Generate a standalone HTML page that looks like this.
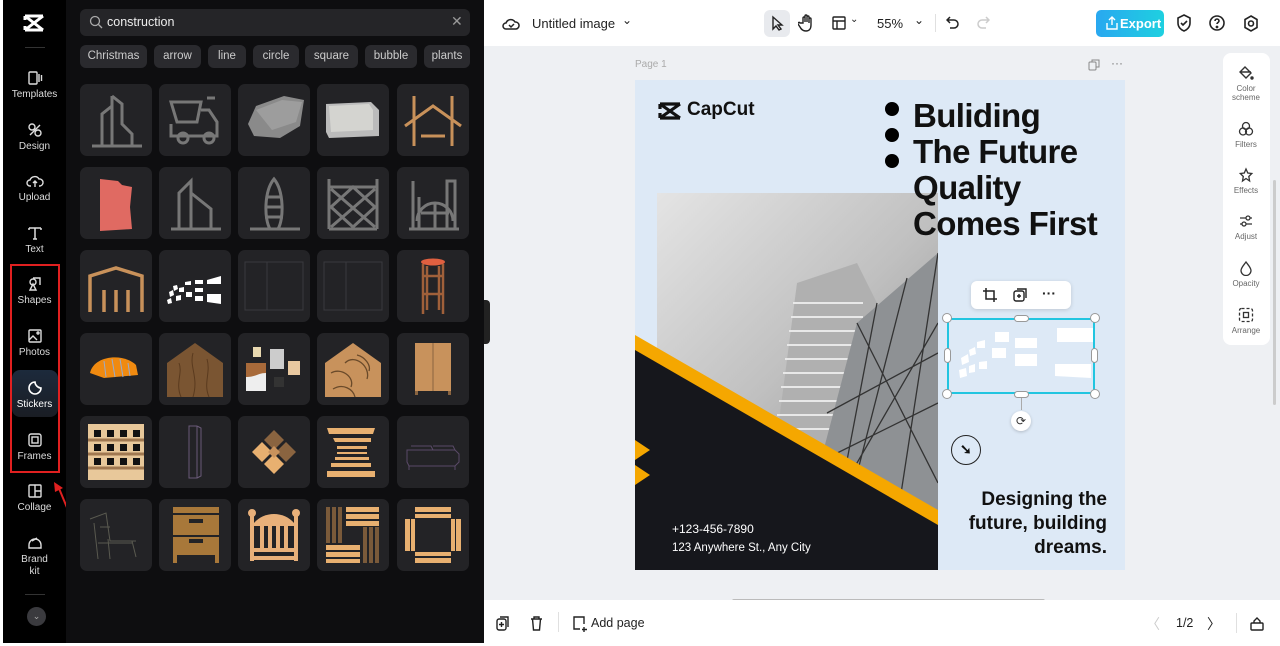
<!DOCTYPE html>
<html><head><meta charset="utf-8"><style>
*{margin:0;padding:0;box-sizing:border-box}
body{width:1280px;height:646px;overflow:hidden;background:#fff;font-family:"Liberation Sans",sans-serif;position:relative}
.a{position:absolute}
#side{left:3px;top:0;width:63px;height:643px;background:#000}
.nav{position:absolute;left:0;width:63px;text-align:center;color:#ddd;font-size:10px}
.nav svg{display:block;margin:0 auto 3px}
#panel{left:66px;top:0;width:418px;height:643px;background:#0e0e10}
.chip{position:absolute;top:45px;height:23px;border-radius:6px;background:#2a2a2e;color:#ccc;font-size:11.5px;line-height:23px;text-align:center}
.tile{position:absolute;width:72px;height:72px;border-radius:7px;background:#232326;overflow:hidden}
.tile svg{width:72px;height:72px}
#main{left:484px;top:0;width:796px;height:646px;background:#eef0f3}
#top{left:484px;top:0;width:796px;height:46px;background:#fff}
#bot{left:484px;top:600px;width:796px;height:44px;background:#fff}
.rp{position:absolute;left:0;width:46px;text-align:center;font-size:8px;color:#666;line-height:9px}
.rp svg{display:block;margin:0 auto 3px}
</style></head><body>
<div class="a" id="side">
 <svg class="a" style="left:19px;top:13px" width="24" height="20" viewBox="0 0 24 20"><path d="M3 3h18M3 17h18M3 3l18 14M21 3L3 17M3 3v4M3 17v-4" stroke="#fff" stroke-width="3" fill="none"/></svg>
 <div class="a" style="left:22px;top:47px;width:20px;height:1px;background:#333"></div>
 <div class="nav" style="top:70px"><svg width="16" height="16" viewBox="0 0 16 16" fill="none" stroke="#ddd" stroke-width="1.4"><rect x="2" y="2" width="8" height="12" rx="1"/><path d="M12 4v8M14.5 5v6"/></svg>Templates</div>
 <div class="nav" style="top:122px"><svg width="16" height="16" viewBox="0 0 16 16" fill="none" stroke="#ddd" stroke-width="1.4"><circle cx="5" cy="5" r="3"/><circle cx="11" cy="11" r="3"/><path d="M3 13l10-10"/></svg>Design</div>
 <div class="nav" style="top:173px"><svg width="18" height="16" viewBox="0 0 18 16" fill="none" stroke="#ddd" stroke-width="1.4"><path d="M5 13H4a3 3 0 010-6 5 5 0 019-1 3.5 3.5 0 011 7h-1M9 14V8M7 10l2-2 2 2"/></svg>Upload</div>
 <div class="nav" style="top:225px"><svg width="16" height="16" viewBox="0 0 16 16" fill="none" stroke="#ddd" stroke-width="1.5"><path d="M2 3h12M8 3v11M2 3v2M14 3v2M6 14h4"/></svg>Text</div>
 <div class="a" style="left:7px;top:264px;width:50px;height:209px;border:2px solid #e02020"></div>
 <div class="nav" style="top:276px"><svg width="16" height="16" viewBox="0 0 16 16" fill="none" stroke="#ddd" stroke-width="1.4"><path d="M6 2h7v7M3 14l3-6 3 6z"/><circle cx="6" cy="6" r="3"/></svg>Shapes</div>
 <div class="nav" style="top:328px"><svg width="16" height="16" viewBox="0 0 16 16" fill="none" stroke="#ddd" stroke-width="1.4"><rect x="2" y="2" width="12" height="12" rx="1"/><path d="M2 12l4-4 4 4"/><circle cx="11" cy="5" r="1"/></svg>Photos</div>
 <div class="a" style="left:9px;top:370px;width:46px;height:47px;border-radius:8px;background:linear-gradient(#1c2a3c,#1a1d24)"></div>
 <div class="nav" style="top:380px;color:#fff"><svg width="16" height="16" viewBox="0 0 16 16" fill="none" stroke="#fff" stroke-width="1.6"><path d="M14 8a6 6 0 11-6-6c0 3 3 6 6 6z"/></svg>Stickers</div>
 <div class="nav" style="top:432px"><svg width="16" height="16" viewBox="0 0 16 16" fill="none" stroke="#ddd" stroke-width="1.4"><rect x="2" y="2" width="12" height="12" rx="2"/><rect x="5" y="5" width="6" height="6"/></svg>Frames</div>
 <div class="nav" style="top:483px"><svg width="16" height="16" viewBox="0 0 16 16" fill="none" stroke="#ddd" stroke-width="1.4"><rect x="2" y="2" width="12" height="12" rx="1"/><path d="M8 2v12M8 8h6"/></svg>Collage</div>
 <svg class="a" style="left:48px;top:480px" width="26" height="44" viewBox="0 0 26 44"><path d="M22 42L7 6" stroke="#e02020" stroke-width="2"/><path d="M3 2l1 10 8-4z" fill="#e02020"/></svg>
 <div class="nav" style="top:535px;line-height:12px"><svg width="16" height="16" viewBox="0 0 16 16" fill="none" stroke="#ddd" stroke-width="1.4"><path d="M2 13h12v-3a6 6 0 00-12 0z M5 6l5-3"/></svg>Brand<br>kit</div>
 <div class="a" style="left:22px;top:594px;width:20px;height:1px;background:#333"></div>
 <div class="a" style="left:24px;top:607px;width:19px;height:19px;border-radius:50%;background:#3a3a3e;color:#aaa;font-size:9px;text-align:center;line-height:18px">⌄</div>
</div>

<div class="a" id="panel">
 <div class="a" style="left:14px;top:9px;width:390px;height:27px;border-radius:6px;background:#252528"></div>
 <svg class="a" style="left:23px;top:15px" width="14" height="14" viewBox="0 0 14 14" fill="none" stroke="#aaa" stroke-width="1.3"><circle cx="6" cy="6" r="4.5"/><path d="M9.5 9.5L13 13"/></svg>
 <div class="a" style="left:41px;top:15px;color:#eee;font-size:12.5px">construction</div>
 <div class="a" style="left:385px;top:13px;color:#999;font-size:14px">✕</div>
 <div class="chip" style="left:14px;width:67px">Christmas</div>
 <div class="chip" style="left:88px;width:47px">arrow</div>
 <div class="chip" style="left:142px;width:38px">line</div>
 <div class="chip" style="left:187px;width:46px">circle</div>
 <div class="chip" style="left:239px;width:53px">square</div>
 <div class="chip" style="left:299px;width:52px">bubble</div>
 <div class="chip" style="left:358px;width:46px;overflow:hidden">plants</div>
</div>

<!-- tiles -->
<div class="tile" style="left:80px;top:84px"><svg viewBox="0 0 72 72" fill="none" stroke="#777" stroke-width="3"><path d="M12 62h50M22 62V30l10-8v40M32 12l10 8v20l10 10v12M32 12v50"/></svg></div>
<div class="tile" style="left:159px;top:84px"><svg viewBox="0 0 72 72" fill="none" stroke="#777" stroke-width="3"><path d="M12 18h30l-4 20H18zM42 26h8l8 12v14H12V40M48 14h8"/><circle cx="24" cy="54" r="5"/><circle cx="50" cy="54" r="5"/></svg></div>
<div class="tile" style="left:238px;top:84px"><svg viewBox="0 0 72 72"><path d="M10 40l8-18 28-10 20 4-4 26-20 12-26-2z" fill="#8a8a8a"/><path d="M18 26l26-10 20 2-6 20-24 8z" fill="#aaa" opacity=".6"/></svg></div>
<div class="tile" style="left:317px;top:84px"><svg viewBox="0 0 72 72"><path d="M9 20l45-2 8 8v26l-50 2-3-6z" fill="#bbb"/><path d="M12 22l40-2 4 6v20l-42 2z" fill="#d4d4d0"/></svg></div>
<div class="tile" style="left:397px;top:84px"><svg viewBox="0 0 72 72" fill="none" stroke="#c8915a" stroke-width="3"><path d="M17 12v50M55 12v50M8 42l28-20 28 20M24 52h24"/></svg></div>

<div class="tile" style="left:80px;top:167px"><svg viewBox="0 0 72 72"><path d="M20 12l18 2 4 4 10 2-2 20 2 22-32 2z" fill="#e06a62"/></svg></div>
<div class="tile" style="left:159px;top:167px"><svg viewBox="0 0 72 72" fill="none" stroke="#777" stroke-width="3"><path d="M12 62h50M20 62V26l12-12v48M32 26l20 16v20"/></svg></div>
<div class="tile" style="left:238px;top:167px"><svg viewBox="0 0 72 72" fill="none" stroke="#777" stroke-width="3"><path d="M12 62h50M36 12c-10 12-10 40-4 50h8c6-10 6-38-4-50zM28 30h16M27 40h18M27 50h18"/></svg></div>
<div class="tile" style="left:317px;top:167px"><svg viewBox="0 0 72 72" fill="none" stroke="#777" stroke-width="3"><path d="M12 12v50M60 12v50M12 20h48M12 62h48M14 22l44 38M58 22L14 60M14 40l22-20 22 20-22 20z"/></svg></div>
<div class="tile" style="left:397px;top:167px"><svg viewBox="0 0 72 72" fill="none" stroke="#777" stroke-width="3"><path d="M12 62h50M16 14v48M22 30v32M50 14h8v48h-8zM20 54a18 18 0 0136 0M38 36v26M24 46h28"/></svg></div>

<div class="tile" style="left:80px;top:250px"><svg viewBox="0 0 72 72" fill="none" stroke="#c8915a" stroke-width="3.5"><path d="M10 36v-10l26-8 26 8v10M10 34v28M24 40v22M36 40v22M48 40v22M62 34v28"/></svg></div>
<div class="tile" style="left:159px;top:250px"><svg viewBox="0 0 72 72" fill="#fff"><path d="M8 50l4-2 1 5-4 1zM10 42l4-2 1 5-4 2zM14 36l4-1 1 4-4 2zM17 46l5-1v5l-5 1zM20 38l5-1v5h-5zM26 32l6-1v4h-6zM27 42h6v5h-6zM36 30h8v4h-8zM36 38h8v4h-8zM36 46h8v5h-8zM48 30l14-4v8H48zM48 44h14v10l-14-2z"/></svg></div>
<div class="tile" style="left:238px;top:250px"><svg viewBox="0 0 72 72" fill="none" stroke="#3a3a3e" stroke-width="1"><rect x="7" y="12" width="58" height="48"/><path d="M29 12v48"/></svg></div>
<div class="tile" style="left:317px;top:250px"><svg viewBox="0 0 72 72" fill="none" stroke="#3a3a3e" stroke-width="1"><rect x="7" y="12" width="58" height="48"/><path d="M29 12v48"/></svg></div>
<div class="tile" style="left:397px;top:250px"><svg viewBox="0 0 72 72"><ellipse cx="36" cy="12" rx="12" ry="3.5" fill="#e06040"/><g stroke="#a0603a" stroke-width="2.5" fill="none"><path d="M26 14v50M46 14v50M30 16v44M42 16v44M26 44h20M26 26h20"/></g></svg></div>

<div class="tile" style="left:80px;top:333px"><svg viewBox="0 0 72 72"><path d="M10 40c4-18 34-20 46-8l2 10-34 3z" fill="#f08a10"/><path d="M24 28l2 16M32 26l3 18M40 26l3 18M48 30l2 13" stroke="#9ac" stroke-width="1"/></svg></div>
<div class="tile" style="left:159px;top:333px"><svg viewBox="0 0 72 72"><path d="M8 30L36 10l28 20v34H8z" fill="#7a5532"/><path d="M20 30c4 10-4 20 2 34M34 20c-4 14 6 24 0 44M48 26c4 14-4 24 2 38" stroke="#5a3a1e" fill="none"/></svg></div>
<div class="tile" style="left:238px;top:333px"><svg viewBox="0 0 72 72"><rect x="15" y="14" width="8" height="10" fill="#e8d8b0"/><rect x="32" y="16" width="14" height="20" fill="#ccc"/><rect x="8" y="30" width="20" height="28" fill="#eee"/><path d="M8 30h20v10c-8 0-10 4-20 4z" fill="#a86a3a"/><rect x="50" y="28" width="12" height="14" fill="#e8c8a0"/><rect x="36" y="44" width="10" height="10" fill="#333"/></svg></div>
<div class="tile" style="left:317px;top:333px"><svg viewBox="0 0 72 72"><path d="M8 30L36 10l28 20v34H8z" fill="#c8925c"/><path d="M14 40c10-6 24 4 20 14M28 30c10-10 26 4 22 16M40 22c8 2 14 10 12 16M16 56c10-6 20 0 22 8" stroke="#6a4a2a" stroke-width="1.3" fill="none"/></svg></div>
<div class="tile" style="left:397px;top:333px"><svg viewBox="0 0 72 72"><rect x="18" y="10" width="36" height="48" fill="#c8925c"/><path d="M36 10v48" stroke="#8a6440"/><rect x="18" y="58" width="3" height="4" fill="#8a6440"/><rect x="51" y="58" width="3" height="4" fill="#8a6440"/></svg></div>

<div class="tile" style="left:80px;top:416px"><svg viewBox="0 0 72 72"><rect x="8" y="8" width="56" height="56" fill="#e8c89a"/><g fill="#111"><rect x="14" y="14" width="7" height="7"/><rect x="27" y="14" width="7" height="7"/><rect x="40" y="14" width="7" height="7"/><rect x="53" y="14" width="7" height="7"/><rect x="14" y="28" width="7" height="7"/><rect x="27" y="28" width="7" height="7"/><rect x="40" y="28" width="7" height="7"/><rect x="53" y="28" width="7" height="7"/><rect x="14" y="42" width="7" height="7"/><rect x="27" y="42" width="7" height="7"/><rect x="40" y="42" width="7" height="7"/><rect x="53" y="42" width="7" height="7"/></g><path d="M8 24h56M8 38h56M8 52h56" stroke="#a07850" stroke-width="3"/></svg></div>
<div class="tile" style="left:159px;top:416px"><svg viewBox="0 0 72 72" fill="none" stroke="#6a5a78"><path d="M30 10h8v52h-8zM38 10l4 2v48l-4 2"/></svg></div>
<div class="tile" style="left:238px;top:416px"><svg viewBox="0 0 72 72"><path d="M36 14l10 10-10 10-10-10z" fill="#8a6440"/><path d="M36 58l10-10-10-10-10 10z" fill="#e8b070"/><path d="M14 36l10-10 10 10-10 10z" fill="#e8b070"/><path d="M58 36l-10-10-10 10 10 10z" fill="#8a6440"/><path d="M36 30l6 6-6 6-6-6z" fill="#c8925c"/></svg></div>
<div class="tile" style="left:317px;top:416px"><svg viewBox="0 0 72 72" fill="#e8b070"><path d="M10 12h48l-2 6H12zM16 22h38v4H18zM20 30h30v3H20zM20 36h30v2H20zM18 41h34v3H18zM14 47h40v4H14zM10 55h48v6H10z"/></svg></div>
<div class="tile" style="left:397px;top:416px"><svg viewBox="0 0 72 72" fill="none" stroke="#5a4a68"><path d="M10 34h48l4 4v8l-4 4H12l-2-4zM14 30h20l2 4M36 30h20l2 4M12 50v4M58 50v4"/></svg></div>

<div class="tile" style="left:80px;top:499px"><svg viewBox="0 0 72 72" fill="none" stroke="#5a5a50"><path d="M10 20l16-6 4 28h26M14 24l4 36M28 40l2 20M52 42l4 16M18 44h34M20 28h10"/></svg></div>
<div class="tile" style="left:159px;top:499px"><svg viewBox="0 0 72 72" fill="#a8783a"><rect x="14" y="8" width="46" height="6"/><path d="M14 16h46v20H14zM14 38h46v18H14z"/><rect x="14" y="56" width="4" height="8"/><rect x="56" y="56" width="4" height="8"/><rect x="30" y="20" width="14" height="4" fill="#232326"/><rect x="30" y="40" width="14" height="4" fill="#232326"/></svg></div>
<div class="tile" style="left:238px;top:499px"><svg viewBox="0 0 72 72" fill="#e8b07a"><circle cx="14" cy="14" r="4"/><circle cx="58" cy="14" r="4"/><rect x="12" y="16" width="4" height="46"/><rect x="56" y="16" width="4" height="46"/><path d="M16 24c10-12 30-12 40 0v3H16z"/><rect x="22" y="27" width="4" height="22"/><rect x="30" y="27" width="4" height="22"/><rect x="38" y="27" width="4" height="22"/><rect x="46" y="27" width="4" height="22"/><rect x="16" y="49" width="40" height="4"/><rect x="16" y="57" width="40" height="4"/></svg></div>
<div class="tile" style="left:317px;top:499px"><svg viewBox="0 0 72 72"><g fill="#7a5a3a"><rect x="9" y="8" width="4" height="36"/><rect x="15" y="8" width="4" height="36"/><rect x="21" y="8" width="4" height="36"/><rect x="46" y="28" width="4" height="36"/><rect x="52" y="28" width="4" height="36"/><rect x="58" y="28" width="4" height="36"/></g><g fill="#e8b070"><rect x="29" y="8" width="33" height="5"/><rect x="29" y="15" width="33" height="5"/><rect x="29" y="22" width="33" height="5"/><rect x="9" y="46" width="34" height="5"/><rect x="9" y="53" width="34" height="5"/><rect x="9" y="60" width="34" height="4"/></g></svg></div>
<div class="tile" style="left:397px;top:499px"><svg viewBox="0 0 72 72" fill="#e8b070"><rect x="18" y="8" width="36" height="5"/><rect x="18" y="15" width="36" height="4"/><rect x="18" y="53" width="36" height="4"/><rect x="18" y="59" width="36" height="5"/><rect x="8" y="20" width="5" height="32"/><rect x="14" y="20" width="4" height="32"/><rect x="54" y="20" width="4" height="32"/><rect x="59" y="20" width="5" height="32"/></svg></div>

<div class="a" id="main"></div>
<div class="a" style="left:484px;top:300px;width:6px;height:44px;background:#222;border-radius:0 4px 4px 0"></div>
<div class="a" id="top"></div>
<svg class="a" style="left:502px;top:15px" width="18" height="16" viewBox="0 0 18 16" fill="none" stroke="#222" stroke-width="1.5"><path d="M5 14H4a3 3 0 010-6 5 5 0 019-1 3.5 3.5 0 011 7H5zM7 10l2 2 3-3"/></svg>
<div class="a" style="left:532px;top:16px;font-size:13px;color:#222">Untitled image</div>
<div class="a" style="left:622px;top:13px;font-size:12px;color:#222">⌄</div>
<div class="a" style="left:764px;top:10px;width:26px;height:27px;border-radius:6px;background:#e8eaee"></div>
<svg class="a" style="left:770px;top:15px" width="14" height="16" viewBox="0 0 14 16" fill="none" stroke="#222" stroke-width="1.4"><path d="M3 2v12l3-3 3 4 2-1-3-4h4z"/></svg>
<svg class="a" style="left:798px;top:14px" width="16" height="18" viewBox="0 0 16 18" fill="none" stroke="#222" stroke-width="1.4"><path d="M5 9V4a1 1 0 012 0v4V2a1 1 0 012 0v6V3a1 1 0 012 0v6V5a1 1 0 012 0v6c0 4-2 6-5 6s-5-2-6-4l-2-3a1 1 0 012-1z"/></svg>
<svg class="a" style="left:832px;top:16px" width="14" height="14" viewBox="0 0 14 14" fill="none" stroke="#222" stroke-width="1.4"><rect x="1" y="1" width="12" height="12" rx="1"/><path d="M1 5h12M5 5v8"/></svg>
<div class="a" style="left:850px;top:14px;font-size:10px;color:#222">⌄</div>
<div class="a" style="left:877px;top:16px;font-size:13px;color:#222">55%</div>
<div class="a" style="left:914px;top:13px;font-size:12px;color:#222">⌄</div>
<div class="a" style="left:935px;top:14px;width:1px;height:18px;background:#e0e0e0"></div>
<svg class="a" style="left:946px;top:15px" width="14" height="16" viewBox="0 0 14 16" fill="none" stroke="#222" stroke-width="1.5"><path d="M4 2L1 5l3 3M1 5h7a4 4 0 010 8H4"/></svg>
<svg class="a" style="left:976px;top:15px" width="14" height="16" viewBox="0 0 14 16" fill="none" stroke="#ccc" stroke-width="1.5"><path d="M10 2l3 3-3 3M13 5H6a4 4 0 000 8h4"/></svg>
<div class="a" style="left:1096px;top:10px;width:68px;height:27px;border-radius:5px;background:linear-gradient(90deg,#29a8f0,#1ed0e0);color:#fff;font-size:13px;font-weight:bold;line-height:27px;padding-left:24px">Export</div>
<svg class="a" style="left:1106px;top:16px" width="12" height="14" viewBox="0 0 12 14" fill="none" stroke="#fff" stroke-width="1.4"><path d="M6 9V1M3 4l3-3 3 3M1 7v6h10V7"/></svg>
<svg class="a" style="left:1176px;top:14px" width="16" height="18" viewBox="0 0 16 18" fill="none" stroke="#222" stroke-width="1.6"><path d="M8 1l6 3v5c0 4-3 7-6 8-3-1-6-4-6-8V4zM5 9l2 2 4-4"/></svg>
<svg class="a" style="left:1209px;top:15px" width="16" height="16" viewBox="0 0 16 16" fill="none" stroke="#222" stroke-width="1.6"><circle cx="8" cy="8" r="7"/><path d="M6 6a2 2 0 114 0c0 1.5-2 1.5-2 3"/><circle cx="8" cy="12" r=".6"/></svg>
<svg class="a" style="left:1243px;top:15px" width="16" height="17" viewBox="0 0 16 17" fill="none" stroke="#222" stroke-width="1.6"><path d="M8 1l6 3.5v8L8 16l-6-3.5v-8z"/><circle cx="8" cy="8.5" r="2.5"/></svg>

<div class="a" style="left:635px;top:59px;font-size:10px;color:#aaa">Page 1</div>
<svg class="a" style="left:1088px;top:59px" width="12" height="12" viewBox="0 0 12 12" fill="none" stroke="#888"><rect x="1" y="3" width="7" height="8" rx="1"/><path d="M4 3V1h7v7H8"/></svg>
<div class="a" style="left:1111px;top:56px;font-size:12px;color:#777">···</div>

<!-- poster -->
<div class="a" style="left:635px;top:80px;width:490px;height:490px;background:#dde9f6;overflow:hidden">
 <svg class="a" style="left:22px;top:21px" width="28" height="20" viewBox="0 0 28 20"><path d="M3 3h20M3 17h20M3 3l20 14M23 3L3 17M3 3v5M3 17v-5" stroke="#111" stroke-width="3.2" fill="none"/></svg>
 <div class="a" style="left:52px;top:19px;font-size:19px;font-weight:bold;color:#111">CapCut</div>
 <div class="a" style="left:250px;top:22px;width:14px;height:14px;border-radius:50%;background:#000"></div>
 <div class="a" style="left:250px;top:48px;width:14px;height:14px;border-radius:50%;background:#000"></div>
 <div class="a" style="left:250px;top:74px;width:14px;height:14px;border-radius:50%;background:#000"></div>
 <div class="a" style="left:22px;top:113px;width:281px;height:322px;background:linear-gradient(135deg,#e4e4e4,#c0c0c0 50%,#8a8a8a)"></div>
 <svg class="a" style="left:22px;top:113px" width="281" height="322" viewBox="0 0 281 322"><path d="M110 320L140 90l60-20 20 40-20 210z" fill="#b0b0b0"/><g stroke="#e8e8e8" stroke-width="2"><path d="M136 110h70M134 124h72M132 138h72M130 152h74M128 166h74M126 180h76M124 194h76M122 208h78M120 222h78M118 236h80"/></g><path d="M150 320L200 130 281 60v262z" fill="#8e9194"/><g stroke="#333" stroke-width="1.3" fill="none"><path d="M200 130l81 160M220 110l-40 210M250 85l-60 235M281 60l-40 260M170 220l111-60M160 270l121-60M281 130l-110 190"/></g></svg>
 <svg class="a" style="left:0;top:0" width="490" height="490" viewBox="0 0 490 490"><path d="M0 255l303 175v60H0z" fill="#f5a700"/><path d="M0 270l303 175v45H0z" fill="#16171c"/><path d="M0 360l15 10-15 10zM0 385l15 10-15 10z" fill="#f5a700"/></svg>
 <div class="a" style="left:278px;top:18px;font-size:33px;font-weight:bold;color:#111;line-height:36px;letter-spacing:-.6px">Buliding<br>The Future<br>Quality<br>Comes First</div>
 <div class="a" style="left:37px;top:442px;color:#fff;font-size:12px">+123-456-7890</div>
 <div class="a" style="left:37px;top:462px;color:#fff;font-size:11.5px">123 Anywhere St., Any City</div>
 <div class="a" style="right:18px;top:408px;font-size:19px;font-weight:bold;color:#111;text-align:right;line-height:24px">Designing the<br>future, building<br>dreams.</div>
 <div class="a" style="left:316px;top:355px;width:30px;height:30px;border-radius:50%;border:1.5px solid #222"></div>
 <div class="a" style="left:325px;top:361px;font-size:14px;font-weight:bold;color:#111">➘</div>
 <svg class="a" style="left:312px;top:238px" width="148" height="75" viewBox="0 0 148 75" fill="#fff"><path d="M14 40l7-4 1 8-7 3zM22 32l6-3 1 7-6 2zM30 24l8-2v8h-8zM12 52l7-2 1 8-7 2zM22 48l6-2v8l-6 1zM32 44l8-1v8h-8zM48 14h14v10H48zM45 30h14v10H45zM68 20h22v10H68zM68 36h22v12H68zM110 10h36v14h-36zM108 46h36v14l-36-2z"/></svg>
</div>
<!-- selection -->
<div class="a" style="left:947px;top:318px;width:148px;height:76px;border:2px solid #22c5e0"></div>
<div class="a" style="left:942px;top:313px;width:10px;height:10px;border-radius:50%;background:#fff;border:1px solid #999"></div>
<div class="a" style="left:1090px;top:313px;width:10px;height:10px;border-radius:50%;background:#fff;border:1px solid #999"></div>
<div class="a" style="left:942px;top:389px;width:10px;height:10px;border-radius:50%;background:#fff;border:1px solid #999"></div>
<div class="a" style="left:1090px;top:389px;width:10px;height:10px;border-radius:50%;background:#fff;border:1px solid #999"></div>
<div class="a" style="left:1014px;top:315px;width:15px;height:7px;border-radius:4px;background:#fff;border:1px solid #999"></div>
<div class="a" style="left:1014px;top:391px;width:15px;height:7px;border-radius:4px;background:#fff;border:1px solid #999"></div>
<div class="a" style="left:944px;top:348px;width:7px;height:15px;border-radius:4px;background:#fff;border:1px solid #999"></div>
<div class="a" style="left:1091px;top:348px;width:7px;height:15px;border-radius:4px;background:#fff;border:1px solid #999"></div>
<div class="a" style="left:1021px;top:398px;width:1px;height:12px;background:#aaa"></div>
<div class="a" style="left:1011px;top:411px;width:20px;height:20px;border-radius:50%;background:#fff;box-shadow:0 1px 3px rgba(0,0,0,.2);font-size:12px;text-align:center;line-height:20px;color:#333">⟳</div>
<div class="a" style="left:971px;top:281px;width:100px;height:28px;border-radius:6px;background:#fff;box-shadow:0 1px 4px rgba(0,0,0,.15)"></div>
<svg class="a" style="left:983px;top:288px" width="14" height="14" viewBox="0 0 14 14" fill="none" stroke="#222" stroke-width="1.5"><path d="M3 0v11h11M0 3h11v11"/></svg>
<svg class="a" style="left:1013px;top:288px" width="14" height="14" viewBox="0 0 14 14" fill="none" stroke="#222" stroke-width="1.4"><rect x="1" y="3" width="10" height="10" rx="2"/><path d="M4 1h9v9M6 6v4M4 8h4"/></svg>
<div class="a" style="left:1042px;top:285px;font-size:14px;font-weight:bold;color:#222">···</div>

<!-- right panel -->
<div class="a" style="left:1223px;top:53px;width:47px;height:292px;border-radius:8px;background:#fff"></div>
<div class="a" style="left:1273px;top:180px;width:3px;height:225px;background:#ccc;border-radius:2px"></div>
<div class="a" style="left:1223px;top:0">
 <div class="rp" style="top:65px"><svg width="16" height="16" viewBox="0 0 16 16" fill="none" stroke="#333" stroke-width="1.4"><path d="M7 2l6 6-5 5-6-6zM2 7h11"/><circle cx="14" cy="13" r="1" fill="#333"/></svg>Color<br>scheme</div>
 <div class="rp" style="top:121px"><svg width="16" height="16" viewBox="0 0 16 16" fill="none" stroke="#333" stroke-width="1.3"><circle cx="8" cy="5" r="3.5"/><circle cx="5" cy="10.5" r="3.5"/><circle cx="11" cy="10.5" r="3.5"/></svg>Filters</div>
 <div class="rp" style="top:167px"><svg width="16" height="16" viewBox="0 0 16 16" fill="none" stroke="#333" stroke-width="1.3"><path d="M8 2l1.8 4 4 .5-3 3 .8 4.5L8 11.5 4.5 14l.8-4.5-3-3 4-.5z"/></svg>Effects</div>
 <div class="rp" style="top:213px"><svg width="16" height="16" viewBox="0 0 16 16" fill="none" stroke="#333" stroke-width="1.3"><path d="M2 5h12M2 11h12"/><circle cx="10" cy="5" r="2" fill="#fff"/><circle cx="6" cy="11" r="2" fill="#fff"/></svg>Adjust</div>
 <div class="rp" style="top:260px"><svg width="16" height="16" viewBox="0 0 16 16" fill="none" stroke="#333" stroke-width="1.3"><path d="M8 2c3 4 5 6 5 8.5a5 5 0 01-10 0C3 8 5 6 8 2z"/></svg>Opacity</div>
 <div class="rp" style="top:307px"><svg width="16" height="16" viewBox="0 0 16 16" fill="none" stroke="#333" stroke-width="1.3"><rect x="1.5" y="1.5" width="13" height="13" rx="2" stroke-dasharray="3 2"/><rect x="5.5" y="5.5" width="5" height="5"/></svg>Arrange</div>
</div>

<div class="a" style="left:732px;top:599px;width:313px;height:4px;border-radius:2px;background:#bbb"></div>
<div class="a" id="bot"></div>
<svg class="a" style="left:496px;top:616px" width="14" height="15" viewBox="0 0 14 15" fill="none" stroke="#222" stroke-width="1.4"><rect x="1" y="3" width="9" height="11" rx="2"/><path d="M4 1h8v10M5.5 6v5M3 8.5h5"/></svg>
<svg class="a" style="left:530px;top:616px" width="13" height="15" viewBox="0 0 13 15" fill="none" stroke="#222" stroke-width="1.4"><path d="M1 3h11M4 3V1h5v2M2.5 3l1 11h6l1-11"/></svg>
<div class="a" style="left:558px;top:612px;width:1px;height:20px;background:#e0e0e0"></div>
<svg class="a" style="left:572px;top:616px" width="16" height="16" viewBox="0 0 16 16" fill="none" stroke="#222" stroke-width="1.4"><path d="M8 13H2V1h10v7M12 11v5M10 13.5h5"/></svg>
<div class="a" style="left:591px;top:616px;font-size:12.5px;color:#222">Add page</div>
<div class="a" style="left:1146px;top:614px;font-size:14px;color:#ccc">〈</div>
<div class="a" style="left:1176px;top:616px;font-size:12.5px;color:#222">1/2</div>
<div class="a" style="left:1207px;top:614px;font-size:14px;color:#222">〉</div>
<div class="a" style="left:1236px;top:613px;width:1px;height:20px;background:#e0e0e0"></div>
<svg class="a" style="left:1250px;top:616px" width="14" height="15" viewBox="0 0 14 15" fill="none" stroke="#222" stroke-width="1.4"><rect x="1" y="7" width="12" height="7" rx="1"/><path d="M4 7V5l3-3 3 3v2"/></svg>
<div class="a" style="left:0;top:643px;width:1280px;height:3px;background:#fff"></div>
</body></html>
